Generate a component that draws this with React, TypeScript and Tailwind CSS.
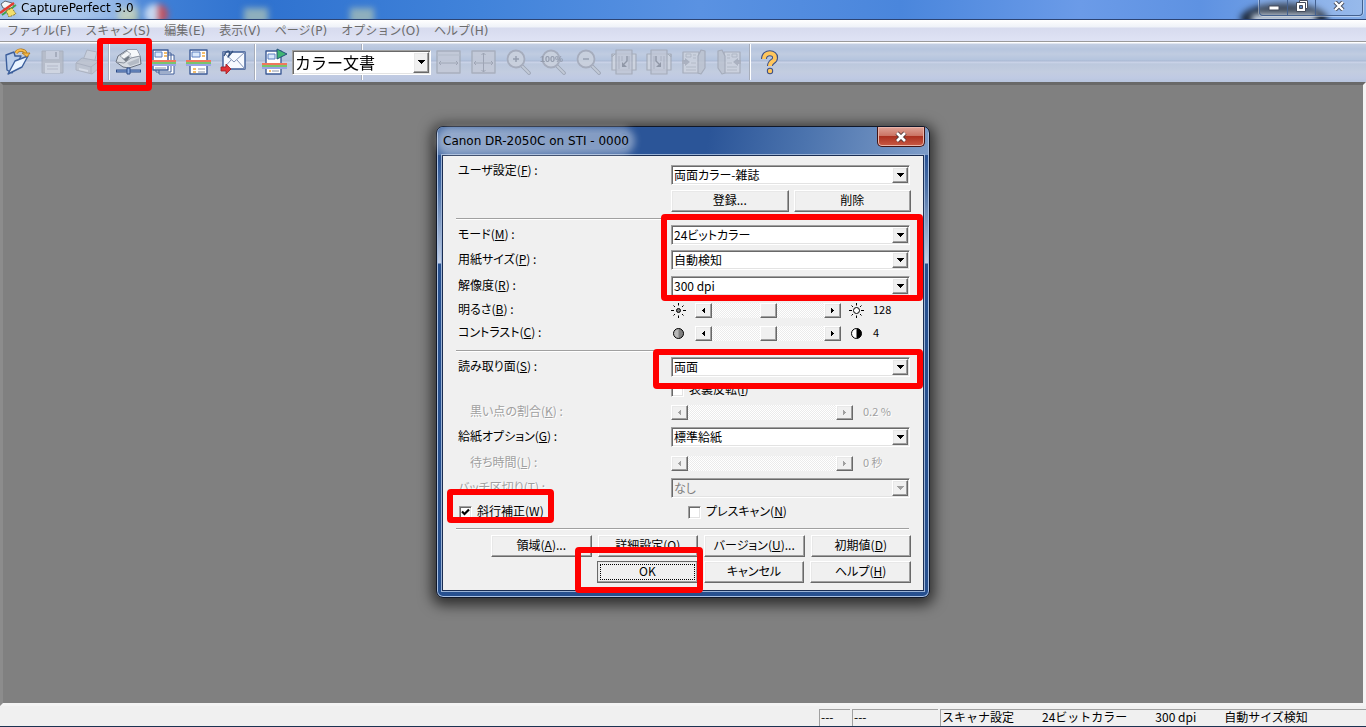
import { useId, useState } from 'react';
import type { ReactNode } from 'react';

const menus = ['ファイル(F)', 'スキャン(S)', '編集(E)', '表示(V)', 'ページ(P)', 'オプション(O)', 'ヘルプ(H)'];

const raised =
  'bg-[#f0f0f0] border border-t-white border-l-white border-r-[#696969] border-b-[#696969] shadow-[inset_-1px_-1px_0_#a0a0a0,inset_1px_1px_0_#e8e8e8]';
const sunken =
  'border border-t-[#a0a0a0] border-l-[#a0a0a0] border-r-white border-b-white shadow-[inset_1px_1px_0_#696969,inset_-1px_-1px_0_#e3e3e3]';

/* ---------- toolbar icons ---------- */

function Icon({ children }: { children: ReactNode }) {
  return (
    <svg width="28" height="28" viewBox="0 0 28 28" fill="none" strokeLinejoin="round">
      {children}
    </svg>
  );
}

function OpenIcon() {
  return (
    <Icon>
      <path d="M2 7 L10 4 L11 8 L17 8 L8 25 L3 22 Z" fill="#b9cdea" stroke="#3c5f9c" strokeWidth="1.4" />
      <path d="M11 13 L24 8 L18 19 L4 26 Z" fill="#eaf4ff" stroke="#3c5f9c" strokeWidth="1.4" />
      <path d="M12 5 C14 1 21 1 22 6" stroke="#a8741c" strokeWidth="3.2" />
      <path d="M12 5 C14 1 21 1 22 6" stroke="#f8bb4a" strokeWidth="2" />
      <path d="M18 5 L26 5 L23 9 Z" fill="#f8bb4a" stroke="#a8741c" strokeWidth=".8" />
    </Icon>
  );
}

function SaveIcon() {
  return (
    <Icon>
      <path d="M3 3 H24 V25 H3 Z" fill="#b4b9c5" stroke="#a4aab7" />
      <path d="M7 3 H20 V11 H7 Z" fill="#c9cedb" />
      <path d="M16 4 H18 V9 H16 Z" fill="#a0a6b4" />
      <path d="M6 15 H21 V25 H6 Z" fill="#d3d7e2" />
      <path d="M8 18 H19 M8 21 H19" stroke="#b0b5c1" />
    </Icon>
  );
}

function PrinterIcon() {
  return (
    <Icon>
      <path d="M9 12 L13 2 L23 4 L20 15 Z" fill="#ccd1dc" stroke="#a6acb9" />
      <path d="M2 15 L8 10 L25 13 L25 20 L18 26 L2 22 Z" fill="#bdc2ce" stroke="#a6acb9" />
      <path d="M2 15 L17 19 L25 13 M17 19 V26" stroke="#a6acb9" />
      <path d="M5 20 L14 22 V24 L5 22 Z" fill="#dce0e9" />
    </Icon>
  );
}

function ScannerIcon() {
  return (
    <Icon>
      <path d="M3 8 L12 2 L22 2 L25 8 L26 16 L14 20 L8 19 L1 14 Z" fill="#d7dce3" stroke="#69717f" />
      <path d="M12 2 L22 2 L25 8 L17 9 Z" fill="#f6f8fa" />
      <path d="M7 10 L11 7 L15 9 L11 14 Z" fill="#727a85" />
      <path d="M5 8 L12 3 L16 6 L9 11 Z" fill="#f3f5f7" stroke="#8b929e" strokeWidth=".7" />
      <path d="M1 14 L9 15 L16 10 L25 8" stroke="#8b929e" />
      <path d="M12 15 L24 10 L24 15 L15 18 Z" fill="#b4bbc5" />
      <path d="M1 23 H26" stroke="#2c4a86" strokeWidth="3" />
      <path d="M2 23 H25" stroke="#8fb0e4" />
      <path d="M12 20 H15 V26 H12 Z" fill="#8fb0e4" stroke="#2c4a86" />
    </Icon>
  );
}

function Rainbow({ y }: { y: number }) {
  return (
    <>
      <path d={`M1 ${y} H26`} stroke="#f0785c" strokeWidth="2" />
      <path d={`M1 ${y + 2} H26`} stroke="#79c46f" strokeWidth="2" />
      <path d={`M1 ${y + 4} H26`} stroke="#9aa4e6" strokeWidth="2" />
    </>
  );
}

function MultiPageIcon() {
  return (
    <Icon>
      <path d="M9 7 H24 V26 H9 Z M6 5 H21 V24 H6 Z" fill="#fff" stroke="#3e5c97" />
      <path d="M3 2 H18 V22 H3 Z" fill="#fff" stroke="#3e5c97" strokeWidth="1.4" />
      <path d="M5 4 H12 V9 H5 Z" fill="#d9e8fb" stroke="#5a7fc0" />
      <path d="M14 5 H17 M14 8 H17" stroke="#f0a93c" strokeWidth="1.4" />
      <path d="M5 20 H16" stroke="#8a94a8" />
      <Rainbow y={13} />
    </Icon>
  );
}

function SinglePageIcon() {
  return (
    <Icon>
      <path d="M5 2 H22 V26 H5 Z" fill="#fff" stroke="#3e5c97" strokeWidth="1.4" />
      <path d="M7 4 H15 V9 H7 Z" fill="#d9e8fb" stroke="#5a7fc0" />
      <path d="M17 5 H20 M17 8 H20" stroke="#f0a93c" strokeWidth="1.4" />
      <path d="M8 21 H11 M8 24 H11" stroke="#f0a93c" strokeWidth="1.4" />
      <path d="M13 21 H20 M13 24 H20" stroke="#8a94a8" />
      <Rainbow y={13} />
    </Icon>
  );
}

function MailIcon() {
  return (
    <Icon>
      <path d="M3 4 H25 V21 H3 Z" fill="#f7faff" stroke="#3e5c97" strokeWidth="1.4" />
      <path d="M3 4 L14 14 L25 4 M3 21 L11 12 M25 21 L17 12" stroke="#8293b5" />
      <path d="M4 8 C7 1 12 2 8 9 L13 3" stroke="#35527f" strokeWidth="1.3" />
      <path d="M1 19 H6 V16 L11 21 L6 26 V23 H1 Z" fill="#e23338" stroke="#a11c22" strokeWidth=".8" />
    </Icon>
  );
}

function JobIcon() {
  return (
    <Icon>
      <path d="M5 3 H20 V26 H5 Z" fill="#fff" stroke="#3e5c97" strokeWidth="1.4" />
      <path d="M7 6 H14 V11 H7 Z" fill="#d9e8fb" stroke="#5a7fc0" />
      <path d="M8 23 H10" stroke="#f0a93c" strokeWidth="1.4" />
      <path d="M11 23 H18" stroke="#8a94a8" />
      <path d="M16 1 L26 6 L16 11 Z" fill="#3fb573" stroke="#24507a" />
      <Rainbow y={16} />
    </Icon>
  );
}

function FitWidthIcon() {
  return (
    <Icon>
      <path d="M2 3 H25 V25 H2 Z" fill="#c3c9d6" stroke="#a2a8b5" strokeWidth="1.4" />
      <path d="M2 7 H25" stroke="#b1b7c4" />
      <path d="M4 15 H23 M6 13 L4 15 L6 17 M21 13 L23 15 L21 17" stroke="#969cab" />
    </Icon>
  );
}

function FitPageIcon() {
  return (
    <Icon>
      <path d="M2 3 H25 V25 H2 Z" fill="#c3c9d6" stroke="#a2a8b5" strokeWidth="1.4" />
      <path d="M4 15 H23 M6 13 L4 15 L6 17 M21 13 L23 15 L21 17" stroke="#969cab" />
      <path d="M13.5 5 V24 M11.5 7 L13.5 5 L15.5 7 M11.5 22 L13.5 24 L15.5 22" stroke="#969cab" />
    </Icon>
  );
}

function ZoomIcon({ sign }: { sign: '+' | '-' | '100' }) {
  return (
    <Icon>
      <path d="M17 18 L24 25" stroke="#9299a8" strokeWidth="3.6" strokeLinecap="round" />
      <path d="M17 18 L24 25" stroke="#c4cad5" strokeWidth="1.8" strokeLinecap="round" />
      <circle cx="11" cy="11" r="8.5" fill="#cbd1dd" stroke="#a0a6b4" strokeWidth="1.8" />
      {sign === '100' ? (
        <text x="0" y="14" className="fill-[#8b92a1] font-['Liberation_Sans'] text-[9px] font-bold">
          100%
        </text>
      ) : (
        <path d={sign === '+' ? 'M8 11 H14 M11 8 V14' : 'M8 11 H14'} stroke="#8b92a1" strokeWidth="1.4" />
      )}
    </Icon>
  );
}

function TurnIcon({ flip }: { flip?: boolean }) {
  return (
    <Icon>
      <g transform={flip ? 'translate(28 0) scale(-1 1)' : undefined}>
        <path d="M2 6 H26 V22 H2 Z" fill="#d0d5df" stroke="#9fa5b2" strokeWidth="1.2" />
        <path d="M6 2 H22 V26 H6 Z" fill="#c0c6d3" fillOpacity=".8" stroke="#9fa5b2" strokeWidth="1.2" />
        <path d="M9 8 V21 M12 8 V13 M19 8 V21 M22 8 V21" stroke="#b1b7c4" strokeWidth="1.5" />
        <path d="M17 8 V13 L14 16" stroke="#858b99" strokeWidth="1.4" />
        <path d="M12 14 V19 H17 Z" fill="#858b99" />
        <path d="M2 6 V9 L5 6" stroke="#9fa5b2" />
      </g>
    </Icon>
  );
}

function BookIcon({ flip }: { flip?: boolean }) {
  return (
    <Icon>
      <g transform={flip ? 'translate(28 0) scale(-1 1)' : undefined}>
        <path d="M3 4 H19 V25 H3 Z" fill="#ced3de" stroke="#9fa5b2" strokeWidth="1.2" />
        <path d="M18 8 L21 2 L25 3 V20 L21 26 L18 25 Z" fill="#bcc2cf" stroke="#9fa5b2" strokeWidth="1.2" />
        <path d="M6 6 H11 V9 H6 Z M13 7 H16 M13 10 H16 M11 15 H16 M6 19 H16 M6 22 H16" stroke="#adb3c0" />
        <path d="M2 12 H5 V10 L10 14 L5 18 V16 H2 Z" fill="#a5abb8" />
      </g>
    </Icon>
  );
}

function HelpIcon() {
  return (
    <Icon>
      <path d="M8 11 C8 3 20 4 19 10 C19 14 14 13 14 18" stroke="#3c4f86" strokeWidth="6" />
      <circle cx="14" cy="23" r="3.2" fill="#3c4f86" />
      <path d="M8 11 C8 3 20 4 19 10 C19 14 14 13 14 18" stroke="#ffc65c" strokeWidth="4" />
      <circle cx="14" cy="23" r="2.2" fill="#ffc65c" />
    </Icon>
  );
}

function ToolButton({ label, disabled, children }: { label: string; disabled?: boolean; children: ReactNode }) {
  return (
    <button
      type="button"
      aria-label={label}
      disabled={disabled}
      className="flex h-9 w-[35px] shrink-0 items-center justify-center disabled:opacity-80"
    >
      {children}
    </button>
  );
}

function ToolSeparator() {
  return (
    <div className="w-[6px] shrink-0 pl-[3px]">
      <div className="h-9 w-[2px] border-r border-l border-r-white border-l-[#a7adba]" />
    </div>
  );
}

/* ---------- classic controls ---------- */

function DownArrow({ disabled }: { disabled?: boolean }) {
  return (
    <span className={`pointer-events-none absolute top-[2px] right-[2px] bottom-[2px] flex w-4 items-center justify-center ${raised}`}>
      <svg width="7" height="4" viewBox="0 0 7 4" fill={disabled ? '#a0a0a0' : '#000'} shapeRendering="crispEdges">
        <path d="M0 0 H7 L4 4 H3 Z" />
      </svg>
    </span>
  );
}

function Caption({ text, hot }: { text: string; hot?: string }) {
  if (!hot) return <>{text}</>;
  return (
    <>
      {text}(<u className="underline-offset-1">{hot}</u>)
    </>
  );
}

interface RowProps {
  id: string;
  text: string;
  hot: string;
  disabled?: boolean;
  className: string;
  children: ReactNode;
}

function Row({ id, text, hot, disabled, className, children }: RowProps) {
  return (
    <div className={`flex items-center ${className}`}>
      <label
        htmlFor={id}
        className={`w-[215px] shrink-0 pb-[3px] leading-3 ${disabled ? 'pl-[14px] text-[#a0a0a0] [text-shadow:1px_1px_0_white]' : 'pl-[2px]'}`}
      >
        <Caption text={text} hot={hot} /> :
      </label>
      {children}
    </div>
  );
}

function Combo({ id, options, disabled }: { id: string; options: string[]; disabled?: boolean }) {
  return (
    <div className="relative mr-px flex-1">
      <select
        id={id}
        disabled={disabled}
        className={`block h-5 w-full appearance-none pr-5 pb-px pl-[2px] leading-4 outline-none ${sunken} ${
          disabled ? 'bg-[#f0f0f0] text-[#808080] opacity-100' : 'bg-white text-black'
        }`}
      >
        {options.map((o) => (
          <option key={o}>{o}</option>
        ))}
      </select>
      <DownArrow disabled={disabled} />
    </div>
  );
}

function ScrollArrow({ dir, disabled }: { dir: 'left' | 'right'; disabled?: boolean }) {
  return (
    <button type="button" aria-label={dir} disabled={disabled} className={`flex w-[17px] shrink-0 items-center justify-center ${raised}`}>
      <svg width="3" height="5" viewBox="0 0 3 5" fill={disabled ? '#a0a0a0' : '#000'} shapeRendering="crispEdges">
        <path d={dir === 'left' ? 'M3 0 V5 L0 3 V2 Z' : 'M0 0 V5 L3 3 V2 Z'} />
      </svg>
    </button>
  );
}

function Scroll({ id, disabled }: { id: string; disabled?: boolean }) {
  return (
    <div className={`flex h-[15px] ${disabled ? 'w-[182px]' : 'w-[146px]'}`}>
      <ScrollArrow dir="left" disabled={disabled} />
      <input
        id={id}
        type="range"
        disabled={disabled}
        className={`h-[15px] min-w-0 flex-1 appearance-none bg-[repeating-conic-gradient(#ffffff_0_25%,#ebebeb_0_50%)] bg-[length:2px_2px] [&::-webkit-slider-thumb]:h-[15px] [&::-webkit-slider-thumb]:w-[17px] [&::-webkit-slider-thumb]:appearance-none [&::-webkit-slider-thumb]:border [&::-webkit-slider-thumb]:border-t-white [&::-webkit-slider-thumb]:border-r-[#696969] [&::-webkit-slider-thumb]:border-b-[#696969] [&::-webkit-slider-thumb]:border-l-white [&::-webkit-slider-thumb]:bg-[#f0f0f0] [&::-webkit-slider-thumb]:shadow-[inset_-1px_-1px_0_#a0a0a0] ${
          disabled ? '[&::-webkit-slider-thumb]:opacity-0' : ''
        }`}
      />
      <ScrollArrow dir="right" disabled={disabled} />
    </div>
  );
}

function Value({ text, disabled }: { text: string; disabled?: boolean }) {
  return <output className={`pb-[3px] text-[11px] leading-3 ${disabled ? 'text-[#a0a0a0] [text-shadow:1px_1px_0_white]' : ''}`}>{text}</output>;
}

function Sun({ core }: { core: string }) {
  return (
    <svg width="16" height="15" viewBox="0 0 16 15" fill="none" stroke="#000">
      <circle cx="7.5" cy="7.5" r={core === '#ffffff' ? 3 : 2} fill={core} />
      <path d="M7.5 0 V2.5 M7.5 12.5 V15 M0 7.5 H3 M12 7.5 H15 M2.5 2.5 L4 4 M11 11 L12.5 12.5 M12.5 2.5 L11 4 M4 11 L2.5 12.5" />
    </svg>
  );
}

function HalfDisc({ left, right }: { left: string; right: string }) {
  return (
    <svg width="16" height="15" viewBox="0 0 16 15">
      <circle cx="7.5" cy="7.5" r="5" fill={left} />
      <path d="M7.5 2.5 A5 5 0 0 1 7.5 12.5 Z" fill={right} />
      <circle cx="7.5" cy="7.5" r="5" fill="none" stroke="#000" />
    </svg>
  );
}

function Check({ text, hot, initial }: { text: string; hot: string; initial?: boolean }) {
  const id = useId();
  const [on, setOn] = useState(!!initial);
  return (
    <div className="flex h-[14px] items-center gap-[5px]">
      <span className="relative block size-[13px]">
        <input
          id={id}
          type="checkbox"
          checked={on}
          onChange={(e) => setOn(e.target.checked)}
          className={`block size-[13px] appearance-none bg-white ${sunken}`}
        />
        {on && (
          <svg width="13" height="13" viewBox="0 0 13 13" className="pointer-events-none absolute inset-0">
            <path d="M3 5.5 L5.5 8 L10 3.5" fill="none" stroke="#000" strokeWidth="2.2" />
          </svg>
        )}
      </span>
      <label htmlFor={id} className="pb-[2px] leading-3">
        <Caption text={text} hot={hot} />
      </label>
    </div>
  );
}

function PushButton({ text, hot, dots, focused }: { text: string; hot?: string; dots?: boolean; focused?: boolean }) {
  return (
    <button
      type="button"
      className={`flex h-[22px] flex-1 items-center justify-center leading-3 ${raised} ${
        focused ? 'outline outline-1 -outline-offset-1 outline-[#696969]' : ''
      }`}
    >
      {focused ? (
        <span className="mx-[2px] flex h-4 flex-1 items-center justify-center border border-dotted border-black pb-[2px]">{text}</span>
      ) : (
        <span className="pb-[3px]">
          <Caption text={text} hot={hot} />
          {dots && '...'}
        </span>
      )}
    </button>
  );
}

function Rule({ className }: { className: string }) {
  return <div className={`mr-[2px] h-[2px] border-t border-b border-t-[#a0a0a0] border-b-white ${className}`} />;
}

// red highlight frame drawn over the controls
function Mark({ className }: { className: string }) {
  return <div className={`pointer-events-none absolute rounded-[4px] border-[6px] border-[#ff0000] ${className}`} />;
}

function ScanDialog() {
  return (
    <div
      role="dialog"
      aria-label="Canon DR-2050C on STI - 0000"
      className="relative w-[494px] rounded-[7px] shadow-[0_3px_14px_4px_rgba(0,0,0,0.65)]"
    >
      <div className="rounded-[7px] border border-[#10182a] bg-[linear-gradient(#2b5496_0_30px,#4a6fa6_60px,#c3d0e6_136px,#27508f_137px)] px-[5px] pb-[6px] shadow-[inset_0_0_0_1px_#a9c0e2]">
        <div className="-mx-1 flex h-7 items-start justify-between rounded-t-[5px] bg-[linear-gradient(100deg,#4e72a9_0,#2b5598_40%,#2b5598_55%,#4c74ae_75%,#7d9cc8_100%)] pl-[5px]">
          <h1 className="mt-[6px] rounded-full bg-white/40 text-[12px] leading-4 shadow-[0_0_7px_6px_rgba(255,255,255,0.4)] font-['DejaVu_Sans',sans-serif]">
            Canon DR-2050C on STI - 0000
          </h1>
          <button
            type="button"
            aria-label="閉じる"
            className="mr-[3px] flex h-5 w-12 items-center justify-center rounded-b-[5px] border border-t-0 border-[#431414] bg-[linear-gradient(#dfa397,#cb7565_45%,#ab3120_50%,#c95a45)] shadow-[inset_0_0_0_1px_#eab5aa]"
          >
            <svg width="14" height="12" viewBox="0 0 14 12">
              <path d="M3 2 L11 10 M11 2 L3 10" stroke="#4b3436" strokeWidth="4.4" />
              <path d="M3 2 L11 10 M11 2 L3 10" stroke="#fff" strokeWidth="2.6" />
            </svg>
          </button>
        </div>

        <form className="border border-[#1a2d52] bg-[#f0f0f0] pt-[9px] pr-3 pb-[7px] pl-[13px] font-['Noto_Sans_CJK_JP',sans-serif] text-[12px] text-black shadow-[0_0_0_1px_#9bb3d6] [font-feature-settings:'palt']">
          <div className="flex items-start">
            <label htmlFor="user" className="w-[215px] shrink-0 pl-[2px] leading-[10px]">
              <Caption text="ユーザ設定" hot="F" /> :
            </label>
            <Combo id="user" options={['両面カラー-雑誌']} />
          </div>
          <div className="mt-[5px] ml-[215px] flex gap-[5px]">
            <PushButton text="登録..." />
            <PushButton text="削除" />
          </div>
          <Rule className="mt-[6px]" />
          <Row id="mode" text="モード" hot="M" className="mt-[5px]">
            <Combo id="mode" options={['24ビットカラー']} />
          </Row>
          <Row id="paper" text="用紙サイズ" hot="P" className="mt-[5px]">
            <Combo id="paper" options={['自動検知']} />
          </Row>
          <Row id="dpi" text="解像度" hot="R" className="mt-[6px]">
            <Combo id="dpi" options={['300 dpi']} />
          </Row>
          <Row id="bright" text="明るさ" hot="B" className="mt-[7px]">
            <div className="flex items-center gap-2">
              <Sun core="#808080" />
              <Scroll id="bright" />
              <Sun core="#ffffff" />
              <Value text="128" />
            </div>
          </Row>
          <Row id="contrast" text="コントラスト" hot="C" className="mt-2">
            <div className="flex items-center gap-2">
              <HalfDisc left="#b8b8b8" right="#808080" />
              <Scroll id="contrast" />
              <HalfDisc left="#ffffff" right="#000000" />
              <Value text="4" />
            </div>
          </Row>
          <Rule className="mt-[9px]" />
          <Row id="side" text="読み取り面" hot="S" className="mt-[5px]">
            <Combo id="side" options={['両面']} />
          </Row>
          <div className="mt-[6px] ml-[215px]">
            <Check text="表裏反転" hot="I" />
          </div>
          <Row id="dots" text="黒い点の割合" hot="K" disabled className="mt-2">
            <div className="flex items-center gap-[10px]">
              <Scroll id="dots" disabled />
              <Value text="0.2 %" disabled />
            </div>
          </Row>
          <Row id="feed" text="給紙オプション" hot="G" className="mt-[7px]">
            <Combo id="feed" options={['標準給紙']} />
          </Row>
          <Row id="wait" text="待ち時間" hot="L" disabled className="mt-[9px]">
            <div className="flex items-center gap-[10px]">
              <Scroll id="wait" disabled />
              <Value text="0 秒" disabled />
            </div>
          </Row>
          <div className="mt-[7px] flex items-center">
            <label htmlFor="batch" className="w-[215px] shrink-0 pb-[3px] pl-[2px] leading-3 text-[#a0a0a0] [text-shadow:1px_1px_0_white]">
              <Caption text="バッチ区切り" hot="T" /> :
            </label>
            <Combo id="batch" options={['なし']} disabled />
          </div>
          <div className="mt-[7px] flex pl-[3px]">
            <div className="w-[229px]">
              <Check text="斜行補正" hot="W" initial />
            </div>
            <Check text="プレスキャン" hot="N" />
          </div>
          <Rule className="mt-[9px]" />
          <div className="mt-[5px] ml-[35px] flex gap-[6px]">
            <PushButton text="領域" hot="A" dots />
            <PushButton text="詳細設定" hot="O" />
            <PushButton text="バージョン" hot="U" dots />
            <PushButton text="初期値" hot="D" />
          </div>
          <div className="mt-1 ml-[141px] flex gap-[6px]">
            <PushButton text="OK" focused />
            <PushButton text="キャンセル" />
            <PushButton text="ヘルプ" hot="H" />
          </div>
        </form>
      </div>

      <Mark className="top-[88px] left-[225px] h-[87px] w-[262px]" />
      <Mark className="top-[223px] left-[217px] h-[40px] w-[270px]" />
      <Mark className="top-[363px] left-[11px] h-[34px] w-[107px]" />
      <Mark className="top-[421px] left-[139px] h-[46px] w-[128px]" />
    </div>
  );
}

function TitleBar() {
  return (
    <header className="relative flex h-[19px] items-start overflow-hidden bg-[linear-gradient(90deg,#a9c6ea_0,#8db3e4_80px,#3f7fd6_160px,#2f72cf_260px,#4183da_480px,#5a92e2_700px,#4a86dc_900px,#6b9be8_1080px,#5e92e2_1200px,#86aee8_100%)]">
      {/* desktop showing through the glass */}
      <div className="absolute inset-0 blur-[3px]">
        <div className="absolute top-2 left-[118px] h-4 w-5 bg-[#a9bfae]" />
        <div className="absolute top-1 left-[144px] h-5 w-6 rounded-full bg-[linear-gradient(90deg,#c6d8f0_60%,#c2505c_60%)]" />
        <div className="absolute top-2 left-[244px] h-4 w-6 bg-[#8fb0bd]" />
        <div className="absolute top-2 left-[350px] h-4 w-6 bg-[#8fb0bd]" />
        <div className="absolute top-[3px] right-[38px] h-8 w-[88px] rounded-[50%] bg-[#1d2a3d]" />
        <div className="absolute top-[14px] right-[50px] h-3 w-16 bg-[#c9d5e4]" />
      </div>
      <div className="relative flex items-center gap-1">
        <svg width="17" height="17" viewBox="0 0 17 17">
          <path d="M1 4 L5 1 L12 3 L14 7 L8 9 L3 8 Z" fill="#f4f6f8" stroke="#5b6370" />
          <path d="M0 13 L14 3" stroke="#e33b2e" strokeWidth="2.4" />
          <path d="M2 15 L16 5" stroke="#3aa04b" strokeWidth="1.8" />
          <path d="M6 11 L12 8 L16 14 L9 17 Z" fill="#f3df6b" stroke="#8a7a2c" strokeDasharray="2 1" />
        </svg>
        <h1 className="rounded-full bg-white/25 text-[12px] leading-[17px] text-black shadow-[0_0_6px_4px_rgba(255,255,255,0.25)] font-['DejaVu_Sans',sans-serif]">
          CapturePerfect 3.0
        </h1>
      </div>
      <div className="relative mr-[3px] ml-auto flex h-4 divide-x divide-[#44618f] rounded-b-[4px] border border-t-0 border-[#44618f] bg-white/15 shadow-[0_0_0_1px_rgba(255,255,255,0.4)]">
        <button type="button" aria-label="最小化" className="flex w-7 items-center justify-center">
          <svg width="12" height="6" viewBox="0 0 12 6">
            <path d="M1 1 H11 V5 H1 Z" fill="#fff" stroke="#444b5a" />
          </svg>
        </button>
        <button type="button" aria-label="元に戻す" className="flex w-7 items-start justify-center">
          <svg width="12" height="12" viewBox="0 0 12 12" fill="#fff" stroke="#444b5a">
            <path d="M3.5 .5 H11.5 V8.5 H3.5 Z" />
            <path d="M.5 2.5 H9.5 V11.5 H.5 Z" />
            <path d="M3.5 5.5 H6.5 V8.5 H3.5 Z" fill="#5c86c4" />
          </svg>
        </button>
        <button type="button" aria-label="閉じる" className="flex w-[46px] items-start justify-center pt-px">
          <svg width="12" height="10" viewBox="0 0 12 10">
            <path d="M2 1 L10 9 M10 1 L2 9" stroke="#444b5a" strokeWidth="4.2" />
            <path d="M2 1 L10 9 M10 1 L2 9" stroke="#fff" strokeWidth="2.4" />
          </svg>
        </button>
      </div>
    </header>
  );
}

export default function App() {
  return (
    <div className="flex min-h-screen flex-col bg-[#f0f0f0] font-['Noto_Sans_CJK_JP',sans-serif] text-[12px]">
      <TitleBar />

      <nav className="flex h-[22px] items-center gap-[14px] border-t border-t-[#2c4474] bg-[linear-gradient(#ffffff_0,#eff2f8_7px,#d7dbee_8px,#dfe3f5_100%)] pl-[7px] font-['DejaVu_Sans','Noto_Sans_CJK_JP',sans-serif] text-[#6d6d6d]">
        {menus.map((m) => (
          <button key={m} type="button" className="leading-4">
            {m}
          </button>
        ))}
      </nav>

      <div className="relative flex h-[41px] items-center border-t border-t-[#9a9a9a] bg-[linear-gradient(#ffffff_0_1px,#c3cee2_2px,#b6c5de_7px,#c0cce1_12px,#b4c4de_18px,#a9b7d1_19px,#cdd5ea_20px,#bcc8dd_22px,#c3cde0_30px,#bfcae3_36px,#b8c5de_100%)]">
        <ToolButton label="開く"><OpenIcon /></ToolButton>
        <ToolButton label="保存" disabled><SaveIcon /></ToolButton>
        <ToolButton label="印刷" disabled><PrinterIcon /></ToolButton>
        <ToolSeparator />
        <ToolButton label="スキャナ設定"><ScannerIcon /></ToolButton>
        <ToolButton label="バッチスキャン"><MultiPageIcon /></ToolButton>
        <ToolButton label="ページスキャン"><SinglePageIcon /></ToolButton>
        <ToolButton label="メール"><MailIcon /></ToolButton>
        <ToolSeparator />
        <ToolButton label="ジョブ"><JobIcon /></ToolButton>
        <div className="flex h-9 w-[139px] shrink-0 items-center bg-[linear-gradient(90deg,transparent_69px,#a7adba_69px_70px,#ffffff_70px_71px,transparent_71px)]">
          <div className="relative w-full">
            <select
              aria-label="ジョブ選択"
              className={`block h-[25px] w-full appearance-none bg-white pr-5 pb-px pl-[2px] text-[16px] leading-5 text-black outline-none ${sunken}`}
            >
              <option>カラー文書</option>
            </select>
            <DownArrow />
          </div>
        </div>
        <ToolButton label="幅に合わせる" disabled><FitWidthIcon /></ToolButton>
        <ToolButton label="全体表示" disabled><FitPageIcon /></ToolButton>
        <ToolButton label="拡大" disabled><ZoomIcon sign="+" /></ToolButton>
        <ToolButton label="等倍" disabled><ZoomIcon sign="100" /></ToolButton>
        <ToolButton label="縮小" disabled><ZoomIcon sign="-" /></ToolButton>
        <ToolButton label="左回転" disabled><TurnIcon /></ToolButton>
        <ToolButton label="右回転" disabled><TurnIcon flip /></ToolButton>
        <ToolButton label="前のページ" disabled><BookIcon /></ToolButton>
        <ToolButton label="次のページ" disabled><BookIcon flip /></ToolButton>
        <ToolSeparator />
        <ToolButton label="ヘルプ"><HelpIcon /></ToolButton>
        <Mark className="-top-1 left-[97px] z-10 h-[53px] w-[55px]" />
      </div>

      <main className="flex flex-1 items-start justify-center border-[3px] border-t-[#696969] border-r-[#f4f4f4] border-b-[#f4f4f4] border-l-[#8c8c8c] bg-[#808080] pt-[41px]">
        <ScanDialog />
      </main>

      <footer className="flex h-[21px] items-end gap-[2px] border-b border-b-[#1c3352] pl-2 text-black">
        <div className="ml-auto h-[17px] w-[31px] border-t border-l border-[#a0a0a0] pl-px leading-[14px]">---</div>
        <div className="h-[17px] w-[86px] border-t border-l border-[#a0a0a0] pl-px leading-[14px]">---</div>
        <div className="flex h-[17px] w-[426px] gap-7 border-t border-l border-[#a0a0a0] pl-px leading-[14px]">
          <span>スキャナ設定</span>
          <span>24ビットカラー</span>
          <span>300 dpi</span>
          <span>自動サイズ検知</span>
        </div>
      </footer>
    </div>
  );
}
